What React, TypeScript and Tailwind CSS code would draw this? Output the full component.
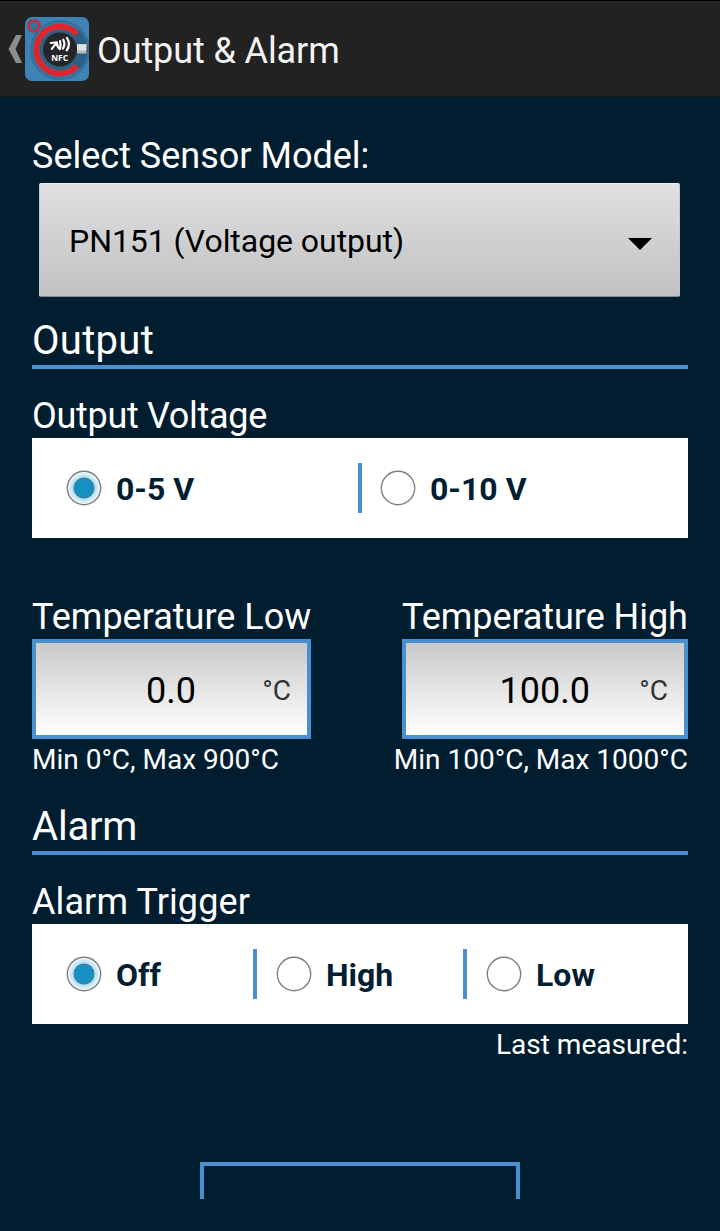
import { useState } from "react";
import { clsx } from "clsx";

function AppIcon() {
  return (
    <svg viewBox="0 0 64 64" className="h-16 w-16 shrink-0" aria-hidden="true">
      <rect width="64" height="64" rx="7" fill="#3f83b4" />
      <circle cx="35" cy="33" r="30" fill="#356f9b" />
      <circle cx="35" cy="33" r="27.500" fill="#3b7cab" />
      <path d="M35 33 54 13.500A28 28 0 0 1 55 52Z" fill="#2a5f86" />
      <circle cx="35" cy="33" r="20.500" fill="#315f82" />
      <path
        d="M52 17A23.500 23.500 0 1 0 52 49"
        fill="none"
        stroke="#de252b"
        strokeWidth="5.800"
      />
      <circle cx="35" cy="32.500" r="17" fill="#252629" />
      <circle cx="9" cy="9" r="7.500" fill="#356f9b" />
      <circle cx="9" cy="9" r="5.300" fill="none" stroke="#de252b" strokeWidth="2.200" />
      <rect x="52" y="27" width="9.500" height="9.500" rx="1" fill="#b9bcbe" />
      <rect x="52" y="27.500" width="9.500" height="6" rx="1" fill="#e2e3e4" />
      <rect x="61.500" y="29" width="2.500" height="6" fill="#4f6372" />
      {/* N mark with the two radio waves */}
      <path
        d="M25.800 26 31.800 25.300 26.800 31.800M31.800 25.500C32 28 33 30.800 34.700 32.200 35.800 30 35.800 27.500 35 24M38.300 22.700c1.400 2.600 1.400 6-.3 8.800M42 21c2.400 3.600 2.300 8.500-.3 12.300"
        fill="none"
        stroke="#fff"
        strokeWidth="2.200"
        strokeLinecap="round"
        strokeLinejoin="round"
      />
      <text
        x="34.700"
        y="44.300"
        textAnchor="middle"
        textLength="17"
        lengthAdjust="spacingAndGlyphs"
        fill="#fff"
        className="font-['Open_Sans',sans-serif] text-[9.6px] font-bold"
      >
        NFC
      </text>
    </svg>
  );
}

function Header() {
  return (
    <header className="flex h-[97px] items-center border-t border-b border-t-black border-b-[#191919] bg-[#222222] pl-2">
      <svg viewBox="0 0 14 28" className="mr-[3px] h-7 w-3.5" aria-hidden="true">
        <path d="M8 0h6L7.500 14 14 28H8L.5 14Z" fill="#8d8d8d" />
      </svg>
      <AppIcon />
      <h1 className="ml-2 pt-1 text-4xl leading-[42px] tracking-[-0.1px] text-[#f3f3f3]">
        Output &amp; Alarm
      </h1>
    </header>
  );
}

function SectionTitle({ children }: { children: string }) {
  return (
    <h2 className="h-[52px] border-b-4 border-[#4a8fcf] text-[40px] leading-[47px]">
      {children}
    </h2>
  );
}

function Radio({ checked }: { checked: boolean }) {
  return (
    <svg viewBox="0 0 36 36" className="h-9 w-9 shrink-0" aria-hidden="true">
      <defs>
        <radialGradient id="glow">
          <stop offset="60%" stopColor="#a5daef" />
          <stop offset="95%" stopColor="#f0f8fb" />
        </radialGradient>
      </defs>
      <circle
        cx="18"
        cy="18"
        r="16.700"
        fill={checked ? "url(#glow)" : "#fff"}
        stroke="#808080"
        strokeWidth="1.400"
      />
      {checked && (
        <circle cx="18" cy="18" r="9.900" fill="#1590c3" stroke="#3f7f9a" strokeWidth="1.200" />
      )}
    </svg>
  );
}

type RadioGroupProps = {
  options: string[];
  widths: string[];
};

function RadioGroup({ options, widths }: RadioGroupProps) {
  const [selected, setSelected] = useState(options[0]);

  return (
    <div className="flex h-[100px] items-center bg-white pl-4 text-[#021e32]">
      {options.map((option, i) => (
        <button
          key={option}
          onClick={() => setSelected(option)}
          className={clsx(
            "flex h-[50px] items-center gap-3.5 text-[32px] font-bold",
            i > 0 && "border-l-4 border-[#4a8fcf]",
            widths[i],
          )}
        >
          <Radio checked={selected === option} />
          <span className="pt-0.5">{option}</span>
        </button>
      ))}
    </div>
  );
}

function TemperatureInput({ value, unitWidth }: { value: string; unitWidth: string }) {
  return (
    <div className="flex h-[100px] items-center justify-end border-4 border-[#4a8fcf] bg-linear-to-b from-[#cacaca] to-white pt-1 pr-4 text-black">
      <span className="text-4xl">{value}</span>
      <span className={clsx("text-right text-[28px] text-[#333]", unitWidth)}>°C</span>
    </div>
  );
}

export default function App() {
  return (
    <div className="h-[1231px] w-[720px] overflow-hidden bg-[#011e31] font-[Roboto,sans-serif] text-white">
      <Header />

      <main className="px-8 pt-[38px]">
        <p className="text-4xl leading-[42px]">Select Sensor Model:</p>
        <button className="mt-1.5 ml-[7px] flex h-[114px] w-[641px] items-center justify-between rounded-xs border border-t-[#eeeeee] border-r-[#c8c8c8] border-b-[#8b8b8b] border-l-[#c8c8c8] bg-linear-to-b from-[#dfe0e2] to-[#c1c1c2] pr-[27px] pl-[29px] text-black">
          <span className="pt-px text-[32px] tracking-[-0.05px]">PN151 (Voltage output)</span>
          <svg viewBox="0 0 24 12" className="mt-2 h-3 w-6" aria-hidden="true">
            <path d="M0 0h24L12 12Z" />
          </svg>
        </button>

        {/* Output */}
        <div className="mt-5 tracking-[0.3px]">
          <SectionTitle>Output</SectionTitle>
        </div>
        <p className="mt-[26px] mb-px text-4xl leading-[42px] tracking-[-0.3px]">Output Voltage</p>
        <RadioGroup
          options={["0-5 V", "0-10 V"]}
          widths={["w-[310px] pl-[18px]", "w-[314px] pl-[18px]"]}
        />

        <div className="mt-[58px] flex justify-between">
          <div className="w-[279px]">
            <p className="mb-px text-4xl leading-[42px] whitespace-nowrap">Temperature Low</p>
            <TemperatureInput value="0.0" unitWidth="w-[95px]" />
            <p className="mt-1 text-[28px] leading-[33px] whitespace-nowrap">Min 0°C, Max 900°C</p>
          </div>
          <div className="flex flex-col items-end">
            <div className="w-[286px]">
              <p className="mb-px text-4xl leading-[42px] tracking-[-0.06px] whitespace-nowrap">
                Temperature High
              </p>
              <TemperatureInput value="100.0" unitWidth="w-[78px]" />
            </div>
            <p className="mt-1 text-[28px] leading-[33px] whitespace-nowrap">
              Min 100°C, Max 1000°C
            </p>
          </div>
        </div>

        {/* Alarm */}
        <div className="mt-[27px] tracking-[-0.2px]">
          <SectionTitle>Alarm</SectionTitle>
        </div>
        <p className="mt-[26px] mb-px text-4xl leading-[42px] tracking-[0.1px]">Alarm Trigger</p>
        <RadioGroup
          options={["Off", "High", "Low"]}
          widths={["w-[205px] pl-[18px]", "w-[210px] pl-[19px]", "w-[210px] pl-[19px]"]}
        />
        <p className="mt-1 text-right text-[28px] leading-[33px]">Last measured:</p>

        {/* Bottom button, cut off by the scroll area */}
        <div className="mx-auto mt-[101px] h-[37px] w-80 border-4 border-b-0 border-[#4a8fcf]" />
      </main>
    </div>
  );
}
